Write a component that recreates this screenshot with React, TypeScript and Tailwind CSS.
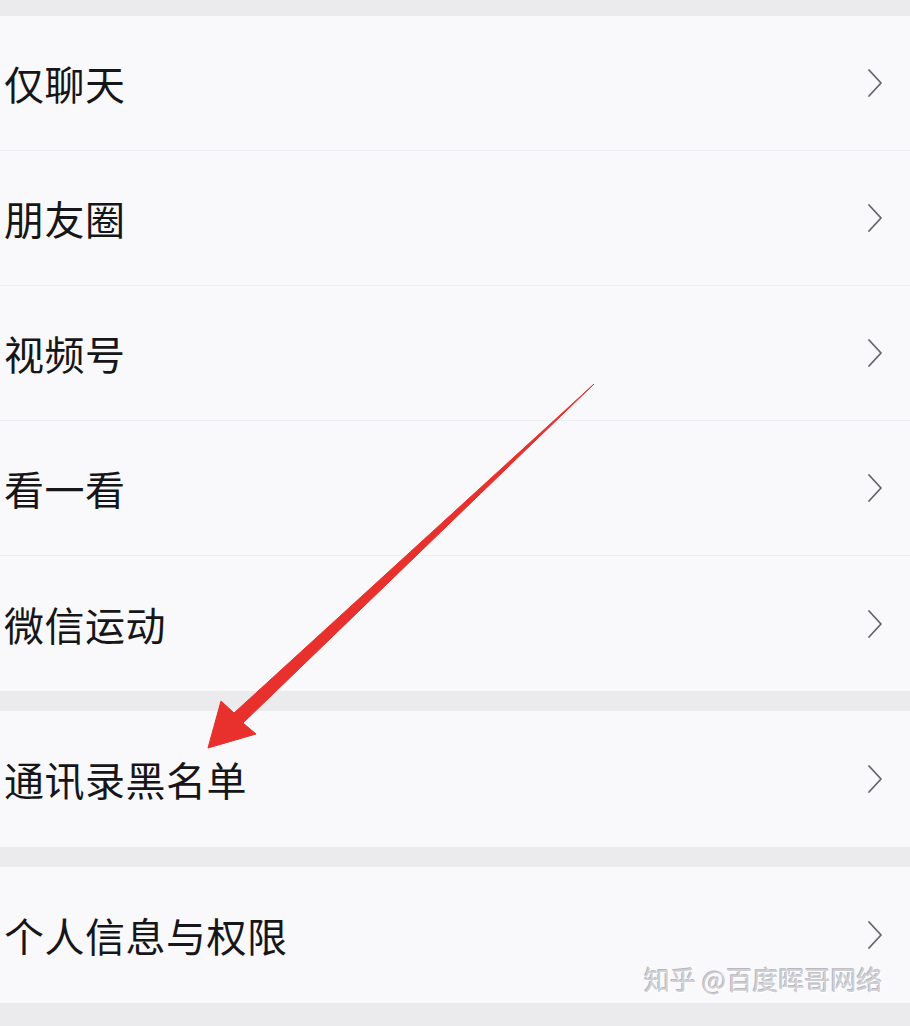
import { Fragment } from "react";

const groups = [
  ["仅聊天", "朋友圈", "视频号", "看一看", "微信运动"],
  ["通讯录黑名单"],
  ["个人信息与权限"],
];

function Chevron() {
  return (
    <svg width="16" height="30" viewBox="0 0 16 30" fill="none" className="shrink-0">
      <path d="M2 2 L14 15 L2 28" stroke="#65656a" strokeWidth="1.8" strokeLinecap="round" strokeLinejoin="round" />
    </svg>
  );
}

function Row({ label, last, tall }: { label: string; last: boolean; tall: boolean }) {
  return (
    <div
      className={`flex items-center justify-between pl-[4px] pr-[27px] ${tall ? "h-[136px]" : "h-[135px]"} ${
        last ? "" : "border-b border-[#eeeff2]"
      }`}
    >
      <span className="text-[40px] leading-none tracking-[0.5px] text-[#161618]">{label}</span>
      <Chevron />
    </div>
  );
}

export default function App() {
  return (
    <div
      className="relative w-[910px] h-[1026px] overflow-hidden bg-[#ebebee]"
      style={{ fontFamily: '"Noto Sans CJK SC", "Noto Sans", sans-serif' }}
    >
      <div className="flex flex-col pt-[16px]">
        {groups.map((items, gi) => (
          <Fragment key={gi}>
            {gi > 0 && <div className="h-[20px]" />}
            <div className="bg-[#f9f9fc]">
              {items.map((label, i) => (
                <Row key={label} label={label} last={i === items.length - 1} tall={items.length === 1} />
              ))}
            </div>
          </Fragment>
        ))}
      </div>

      {/* red annotation arrow */}
      <svg className="absolute left-0 top-0 pointer-events-none" width="910" height="1026">
        <polygon
          points="594,384 243,723 256,734 208,748 221,701 234,713"
          fill="#e8302c"
          stroke="#e8302c"
          strokeWidth="1"
          strokeLinejoin="round"
        />
      </svg>

      {/* watermark */}
      <div
        className="absolute left-[644px] top-[966px] text-[26px] leading-none text-[#cfcfd4] whitespace-nowrap"
        style={{ textShadow: "1px 1px 0 #ffffff, -1px -1px 0 #b8b8be" }}
      >
        知乎 @百度晖哥网络
      </div>
    </div>
  );
}
